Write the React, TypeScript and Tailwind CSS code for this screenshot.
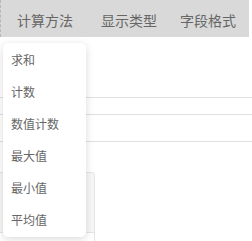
import React from 'react';

const tabs = [
  { label: '计算方法', className: 'ml-[16px]' },
  { label: '显示类型', className: 'ml-[28px]' },
  { label: '字段格式', className: 'ml-[23px]' },
];

const options = ['求和', '计数', '数值计数', '最大值', '最小值', '平均值'];

export default function App() {
  return (
    <div
      className="relative h-[241px] w-[252px] overflow-hidden bg-white"
      style={{ fontFamily: '"Noto Sans CJK SC", "Noto Sans", sans-serif' }}
    >
      {/* tab header */}
      <div className="flex h-[37px] w-[249px] items-center border-l border-dashed border-[#b8b8b8] bg-[#d9d9d9]">
        {tabs.map((tab) => (
          <span
            key={tab.label}
            className={`pt-[2px] text-[14px] leading-none text-[#666666] ${tab.className}`}
          >
            {tab.label}
          </span>
        ))}
      </div>

      {/* content behind the menu */}
      <div className="h-[60px]" />
      <div className="h-[17px] border-t border-[#e0e0e0]" />
      <div className="h-[27px] border-t border-[#e0e0e0]" />
      <div className="h-[31px] border-t border-[#e0e0e0]" />
      <div className="flex">
        <div className="h-[61px] w-[95px] rounded-tr-[4px] border-r border-t border-[#e5e5e5] bg-[#f7f7f7]">
          <div className="h-[60px] border-b border-[#e5e5e5]" />
        </div>
      </div>
      <div className="ml-[94px] h-[20px] w-px bg-[#e5e5e5]" />

      {/* dropdown menu */}
      <div className="absolute left-[3px] top-[43px] w-[83px] rounded-[5px] bg-white py-px shadow-[0_2px_8px_rgba(0,0,0,0.15)]">
        {options.map((opt) => (
          <div
            key={opt}
            className="flex h-[32px] items-center pl-[8px] text-[12px] text-[#666666]"
          >
            {opt}
          </div>
        ))}
      </div>
    </div>
  );
}
